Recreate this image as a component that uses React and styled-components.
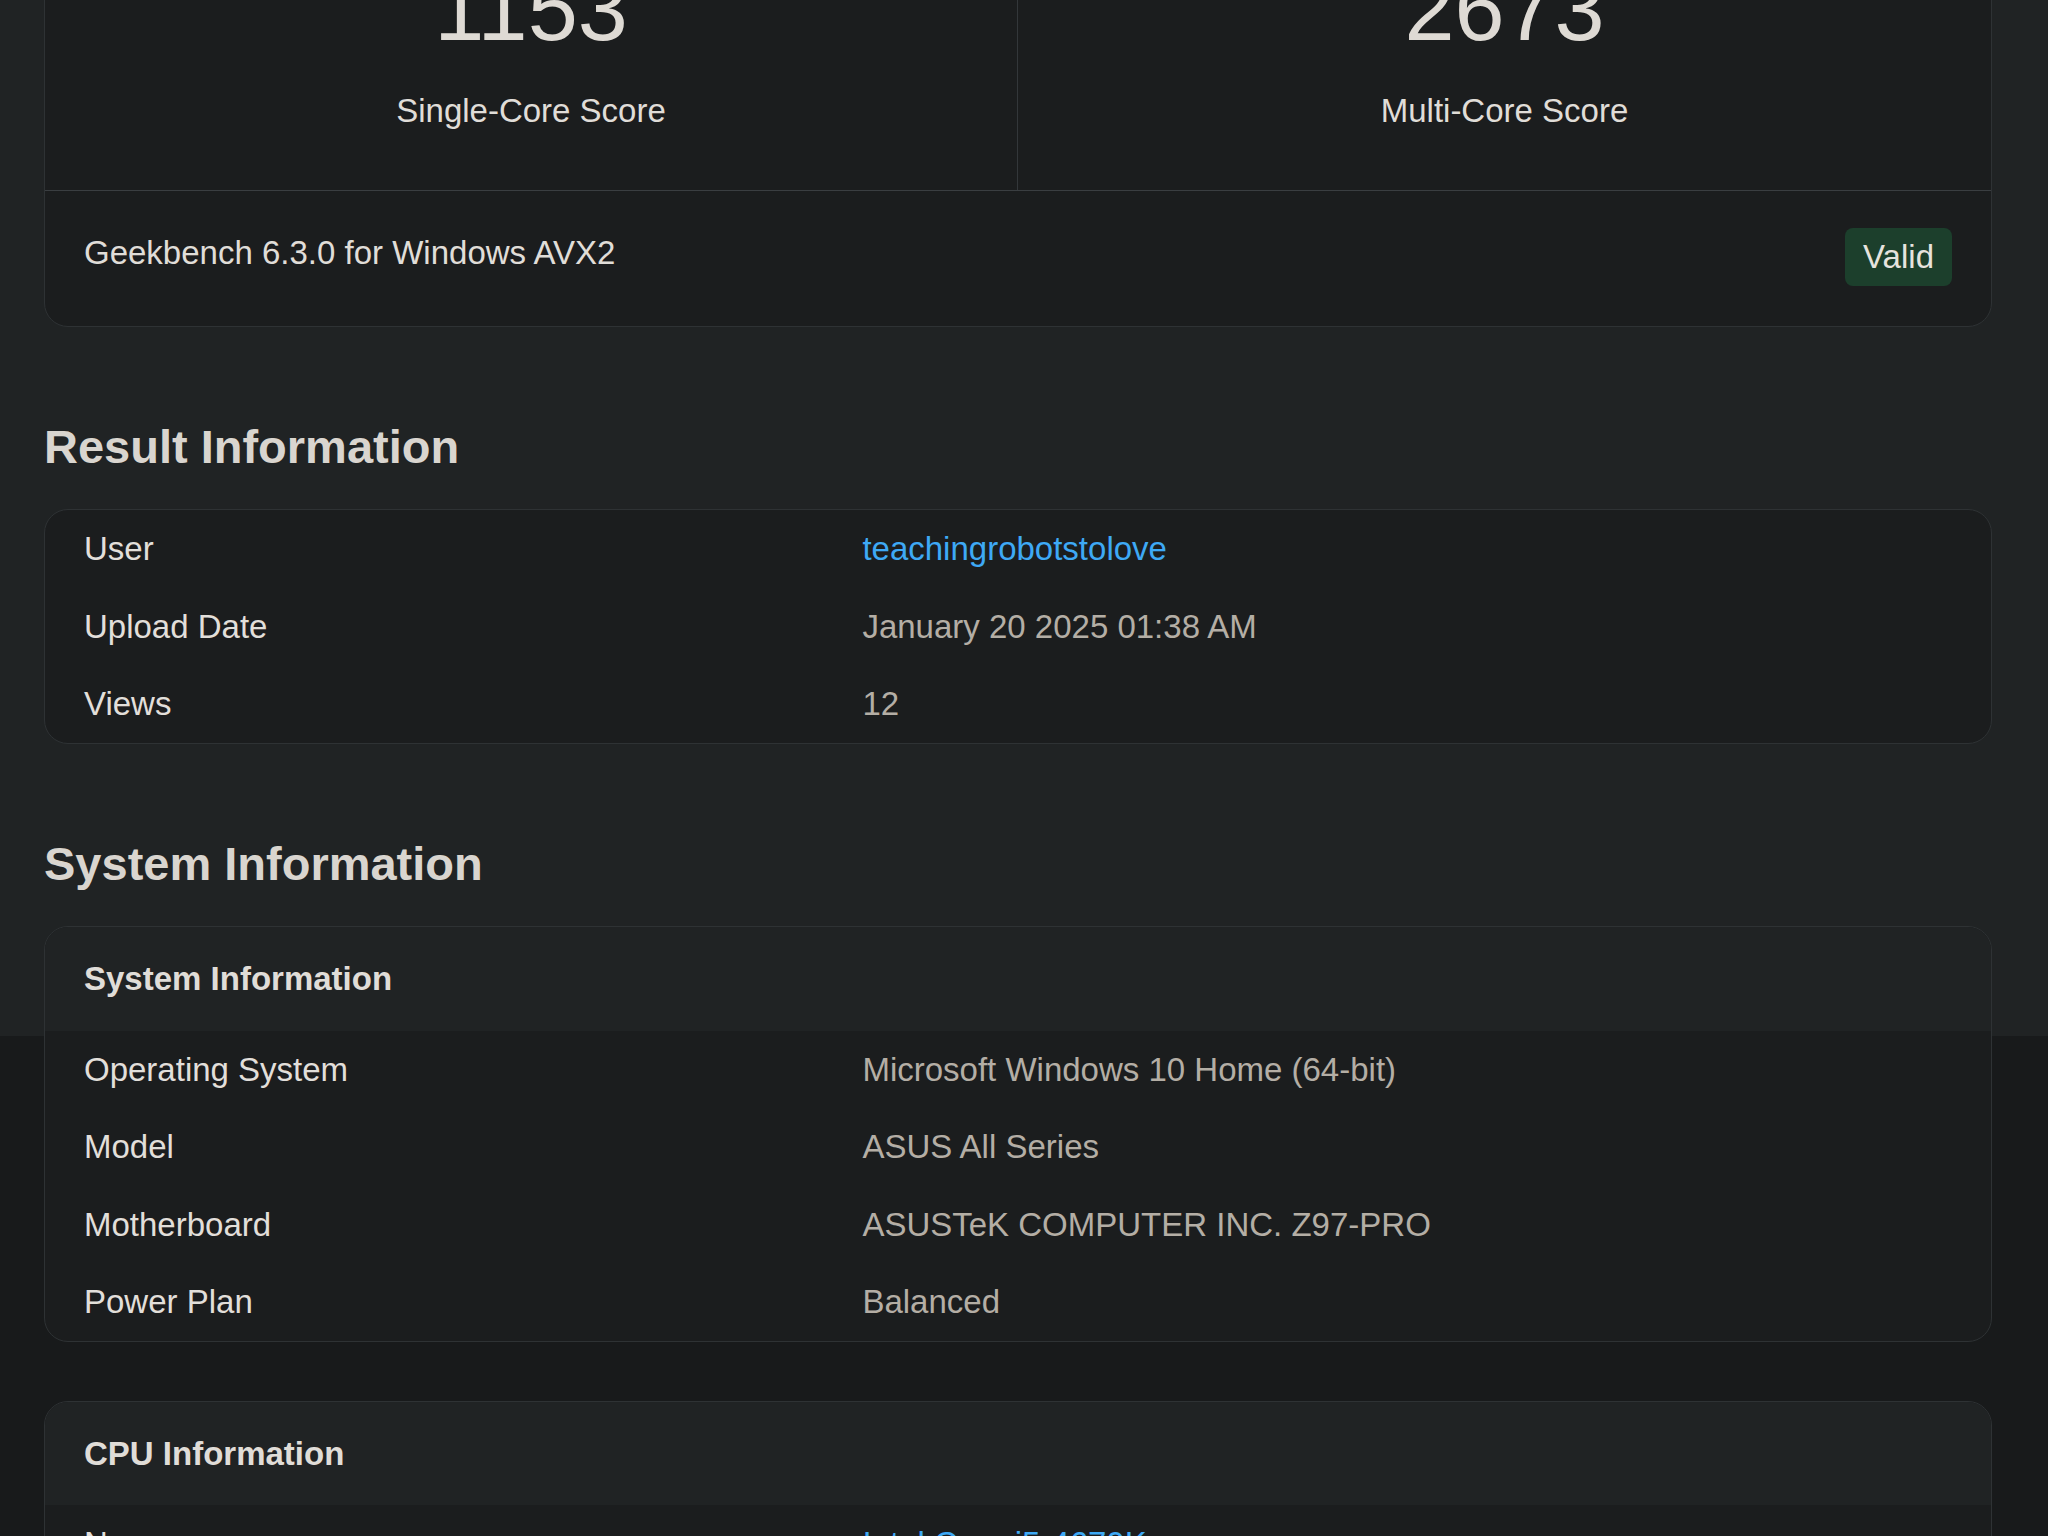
import React from "react";
import styled, { createGlobalStyle } from "styled-components";

const GlobalStyle = createGlobalStyle`
  html, body {
    margin: 0;
    padding: 0;
  }
  body {
    background: #181a1b;
    font-family: "Liberation Sans", Arial, Helvetica, sans-serif;
    color: #e0ddd8;
  }
`;

/* The page is shown scrolled: the lighter surface ends 1536px below its own top. */
const Page = styled.div`
  margin-top: -500px;
  padding-top: 1px;
  background: linear-gradient(to bottom, #202324 0, #202324 1536px, #181a1b 1536px);
`;

const Container = styled.main`
  padding: 379px 56px 60px 44px;
  display: flex;
  flex-direction: column;
`;

const Card = styled.section`
  border: 1px solid #2e3234;
  border-radius: 24px;
  background: #1b1d1e;
  overflow: hidden;
  margin-top: ${(p) => p.$gap || 0}px;
`;

const ScoreGrid = styled.div`
  display: grid;
  grid-template-columns: 1fr 1fr;
`;

const ScoreCell = styled.div`
  text-align: center;
  padding: 73.5px 20px 55px;
  border-right: ${(p) => (p.$divider ? "1px solid #33373a" : "none")};
`;

const ScoreValue = styled.div`
  font-size: 90px;
  line-height: 1.2;
  font-weight: 400;
  color: #dedad4;
`;

const ScoreLabel = styled.div`
  margin-top: 23px;
  font-size: 33px;
  line-height: 49.5px;
  color: #e0ddd8;
`;

const ScoreFooter = styled.div`
  display: flex;
  justify-content: space-between;
  align-items: flex-start;
  padding: 37px 39px 40px;
  border-top: 1px solid #3a3e41;
  font-size: 33px;
  line-height: 49.5px;
  color: #e0ddd8;
`;

const Badge = styled.span`
  display: inline-block;
  padding: 4px 18px;
  border-radius: 8px;
  background: #1c3f2c;
  color: #e6e3de;
  font-size: 33px;
  line-height: 50px;
`;

const SectionTitle = styled.h2`
  margin: 92px 0 34px;
  font-size: 47px;
  line-height: 1.2;
  font-weight: 700;
  color: #d9d5cf;
`;

const CardHeader = styled.div`
  padding: 27px 39px;
  background: #202324;
  font-size: 33px;
  line-height: 49.5px;
  font-weight: 700;
  color: #e0ddd8;
`;

const Row = styled.div`
  display: grid;
  grid-template-columns: 40% 60%;
  padding: 14px 0;
  font-size: 33px;
  line-height: 49.5px;
`;

const Label = styled.div`
  padding: 0 39px;
  color: #e2dfda;
`;

const Value = styled.div`
  padding: 0 39px;
  color: #b4aea5;
`;

const Link = styled.a`
  color: #3ea9f5;
  text-decoration: none;
`;

const InfoRows = ({ rows }) =>
  rows.map(([label, value, href]) => (
    <Row key={label}>
      <Label>{label}</Label>
      <Value>{href ? <Link href={href}>{value}</Link> : value}</Value>
    </Row>
  ));

const resultRows = [
  ["User", "teachingrobotstolove", "#user"],
  ["Upload Date", "January 20 2025 01:38 AM"],
  ["Views", "12"],
];

const systemRows = [
  ["Operating System", "Microsoft Windows 10 Home (64-bit)"],
  ["Model", "ASUS All Series"],
  ["Motherboard", "ASUSTeK COMPUTER INC. Z97-PRO"],
  ["Power Plan", "Balanced"],
];

const cpuRows = [
  ["Name", "Intel Core i5-4670K", "#cpu"],
  ["Topology", "1 Processor, 4 Cores"],
  ["Identifier", "GenuineIntel Family 6 Model 60 Stepping 3"],
  ["Base Frequency", "3.40 GHz"],
];

export default function App() {
  return (
    <>
      <GlobalStyle />
      <Page>
        <Container>
          <Card>
            <ScoreGrid>
              <ScoreCell $divider>
                <ScoreValue>1153</ScoreValue>
                <ScoreLabel>Single-Core Score</ScoreLabel>
              </ScoreCell>
              <ScoreCell>
                <ScoreValue>2673</ScoreValue>
                <ScoreLabel>Multi-Core Score</ScoreLabel>
              </ScoreCell>
            </ScoreGrid>
            <ScoreFooter>
              <span>Geekbench 6.3.0 for Windows AVX2</span>
              <Badge>Valid</Badge>
            </ScoreFooter>
          </Card>

          <SectionTitle>Result Information</SectionTitle>
          <Card>
            <InfoRows rows={resultRows} />
          </Card>

          <SectionTitle>System Information</SectionTitle>
          <Card>
            <CardHeader>System Information</CardHeader>
            <InfoRows rows={systemRows} />
          </Card>

          <Card $gap={59}>
            <CardHeader>CPU Information</CardHeader>
            <InfoRows rows={cpuRows} />
          </Card>
        </Container>
      </Page>
    </>
  );
}
